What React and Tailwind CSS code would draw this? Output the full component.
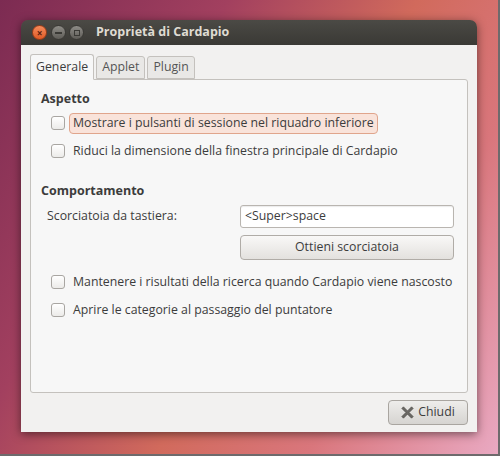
import { useState } from "react";

const FONT = { fontFamily: '"Open Sans", "DejaVu Sans", sans-serif' };

function CheckRow({ label, focused }) {
  return (
    <div className="flex items-center h-[28px] pl-[10px]">
      <span className="w-[14px] h-[14px] rounded-[3px] border border-[#a9a6a2] bg-gradient-to-b from-[#ffffff] to-[#ecebe9] shrink-0" />
      <span
        className={
          "ml-[4px] px-[3px] h-[21px] flex items-center rounded-[4px] text-[12.3px] text-[#3c3c3c] whitespace-nowrap " +
          (focused ? "bg-[#f9e3da] border border-[#e0a58c]" : "border border-transparent")
        }
      >
        {label}
      </span>
    </div>
  );
}

function Tab({ label, active }) {
  return (
    <div
      className={
        "px-[5px] flex items-center text-[12.3px] text-[#3c3c3c] border border-[#c4c1bd] rounded-t-[3px] " +
        (active
          ? "h-[26px] bg-[#f7f7f7] border-b-[#f7f7f7] -mb-px relative z-10"
          : "h-[23px] bg-[#e9e8e6] text-[#555]")
      }
    >
      {label}
    </div>
  );
}

export default function App() {
  const [tab] = useState("Generale");
  return (
    <div className="w-[504px] h-[460px] bg-white" style={FONT}>
      <div className="w-[500px] h-[456px] border-r-2 border-b-2 border-[#6e6a6c] bg-[linear-gradient(120deg,#7c2b52_0%,#a2405f_30%,#d16a5c_55%,#d9767c_75%,#e9a9c2_100%)] pt-[20px] pl-[21px]">
        <div className="w-[456px] shadow-[0_2px_10px_rgba(0,0,0,0.5)] rounded-t-[7px]">
          {/* title bar */}
          <div className="h-[25px] rounded-t-[7px] bg-gradient-to-b from-[#4b4a45] to-[#3a3935] flex items-center pl-[11px]">
            <span className="w-[15px] h-[15px] rounded-full bg-gradient-to-b from-[#f58a5a] to-[#e05a25] border border-[#9b3c18] flex items-center justify-center text-[#5a2010] text-[10px] leading-none font-bold">×</span>
            <span className="ml-[4px] w-[15px] h-[15px] rounded-full bg-gradient-to-b from-[#8e8c87] to-[#5f5d58] border border-[#3a3935] flex items-center justify-center">
              <span className="w-[7px] h-[2px] bg-[#3a3935]" />
            </span>
            <span className="ml-[3px] w-[15px] h-[15px] rounded-full bg-gradient-to-b from-[#8e8c87] to-[#5f5d58] border border-[#3a3935] flex items-center justify-center">
              <span className="w-[6px] h-[6px] border border-[#3a3935]" />
            </span>
            <span className="ml-[12px] text-[12.5px] font-bold text-[#dfdbd2] whitespace-nowrap">Proprietà di Cardapio</span>
          </div>
          {/* body */}
          <div className="h-[387px] bg-[#f2f1f0] pt-[9px] px-[9px] flex flex-col">
            <div className="flex items-end gap-[2px]">
              <Tab label="Generale" active={tab === "Generale"} />
              <Tab label="Applet" />
              <Tab label="Plugin" />
            </div>
            <div className="h-[314px] border border-[#c4c1bd] rounded-b-[3px] rounded-tr-[3px] bg-[#f7f7f7] pt-[9px] pl-[10px] pr-[13px]">
              <div className="text-[12.5px] font-bold text-[#3c3c3c] h-[20px] flex items-center">Aspetto</div>
              <div>
                <CheckRow label="Mostrare i pulsanti di sessione nel riquadro inferiore" focused />
                <CheckRow label="Riduci la dimensione della finestra principale di Cardapio" />
              </div>
              <div className="mt-[16px] text-[12.5px] font-bold text-[#3c3c3c] h-[20px] flex items-center">Comportamento</div>
              <div className="mt-[4px] flex pl-[6px]">
                <div className="w-[193px] h-[22px] flex items-center text-[12.3px] text-[#3c3c3c] whitespace-nowrap">Scorciatoia da tastiera:</div>
                <div className="flex-1 flex flex-col gap-[7px]">
                  <div className="h-[23px] border border-[#b9b5b0] rounded-[3px] bg-white flex items-center px-[4px] text-[12.3px] text-[#3c3c3c] shadow-[inset_0_1px_1px_rgba(0,0,0,0.08)]">&lt;Super&gt;space</div>
                  <div className="h-[25px] border border-[#b0aca7] rounded-[4px] bg-gradient-to-b from-[#f9f8f7] to-[#e3e1de] flex items-center justify-center text-[12.3px] text-[#3c3c3c]">Ottieni scorciatoia</div>
                </div>
              </div>
              <div className="mt-[8px]">
                <CheckRow label="Mantenere i risultati della ricerca quando Cardapio viene nascosto" />
                <CheckRow label="Aprire le categorie al passaggio del puntatore" />
              </div>
            </div>
            <div className="flex justify-end mt-[7px]">
              <div className="w-[80px] h-[25px] border border-[#a9a5a0] rounded-[4px] bg-gradient-to-b from-[#eeedeb] to-[#d6d4d1] flex items-center justify-center gap-[4px] text-[12.3px] text-[#3c3c3c]">
                <svg width="13" height="13" viewBox="0 0 16 16">
                  <path d="M3 1 L8 6 L13 1 L15 3 L10 8 L15 13 L13 15 L8 10 L3 15 L1 13 L6 8 L1 3 Z" fill="#6a6864" stroke="#4e4c48" strokeWidth="0.8" strokeLinejoin="round" />
                </svg>
                Chiudi
              </div>
            </div>
          </div>
        </div>
      </div>
    </div>
  );
}
